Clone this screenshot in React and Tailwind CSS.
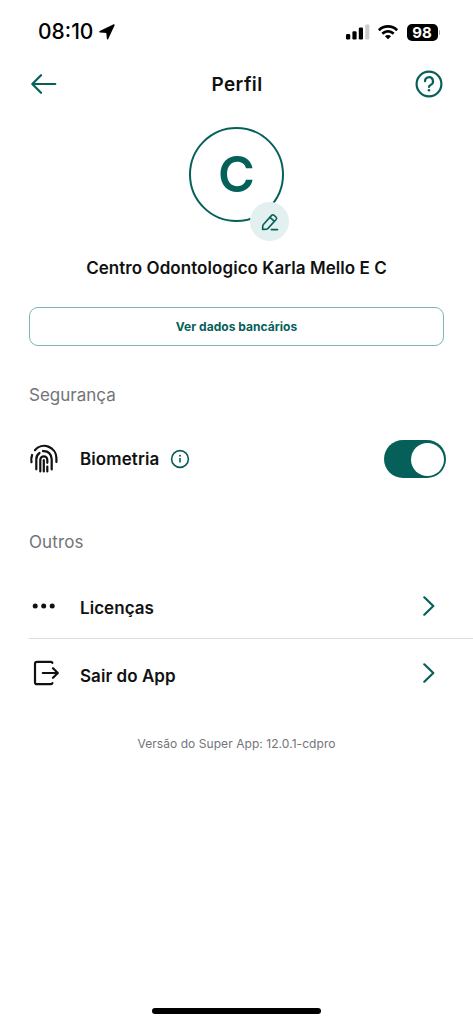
import React from "react";

function StatusBar() {
  return (
    <div className="flex h-16 items-center justify-between pl-[38px] pr-[33px]">
      <div className="flex items-center gap-[6px]">
        <span className="text-[21px] font-medium leading-6 text-black">08:10</span>
        <svg
          width="16"
          height="16"
          viewBox="0 0 16 16"
          fill="#000"
          stroke="#000"
          strokeWidth="1.4"
          strokeLinejoin="round"
        >
          <path d="M15 1L8.600 14.800 7.900 8.200 1 7.700z" />
        </svg>
      </div>
      <div className="flex items-center">
        <svg width="24" height="16" viewBox="0 0 24 16">
          <rect x="0" y="10" width="4.2" height="5.5" rx="1.2" fill="#000" />
          <rect x="6.4" y="7.3" width="4.2" height="8.2" rx="1.2" fill="#000" />
          <rect x="12.8" y="3.6" width="4.2" height="11.9" rx="1.2" fill="#000" />
          <rect x="19.2" y="0.5" width="4.2" height="15" rx="1.2" fill="#ccc" />
        </svg>
        <svg width="20" height="15" viewBox="0 0 20 15" fill="#000" className="ml-[8px]">
          <path d="M10 0C6.2 0 2.7 1.5.2 4c-.2.2-.2.4 0 .6l1.300 1.300c.2.2.4.2.6 0C4.200 3.900 7 2.800 10 2.800s5.800 1.100 7.900 3.100c.2.2.4.2.6 0l1.300-1.300c.2-.2.2-.4 0-.6C17.300 1.500 13.800 0 10 0z" />
          <path d="M10 5C7.600 5 5.400 5.900 3.700 7.400c-.2.2-.2.5 0 .7L5 9.400c.2.2.4.2.6 0C6.800 8.400 8.300 7.800 10 7.800s3.200.6 4.400 1.600c.2.2.4.2.6 0l1.300-1.300c.2-.2.2-.5 0-.7C14.600 5.900 12.400 5 10 5z" />
          <path d="M10 10c-1.100 0-2 .4-2.800 1-.2.2-.2.4 0 .6l2.500 2.500c.2.2.4.2.6 0l2.500-2.500c.2-.2.2-.4 0-.6-.8-.6-1.700-1-2.800-1z" />
        </svg>
        <div className="ml-[9px] flex h-[17px] w-[31px] items-center justify-center rounded-[5px] bg-black text-[15px] font-bold leading-none text-white">
          98
        </div>
        <div className="ml-px h-[5px] w-[1.5px] rounded-r bg-[#aaa]" />
      </div>
    </div>
  );
}

function FingerprintIcon() {
  return (
    <svg
      width="30"
      height="30"
      viewBox="0 0 30 30"
      fill="none"
      stroke="#111"
      strokeWidth="2.2"
      strokeLinecap="round"
    >
      <path d="M5.900 6.200A12.200 12.200 0 0 1 27.400 14v4" />
      <path d="M3.100 11c-.9 2.300-1.100 4.700-.6 7.200" />
      <path d="M7.300 25.300V15.300a7.500 7.500 0 0 1 3.200-6.300M14 7.200c5-.5 8.700 2.800 8.700 8v10.300" />
      <path d="M11.300 27.500V15.800a3.500 3.500 0 0 1 7 0v3M18.300 22.500v5" />
      <path d="M14.800 16.200v11.300" />
    </svg>
  );
}

function ExitIcon() {
  return (
    <svg
      width="30"
      height="28"
      viewBox="0 0 30 28"
      fill="none"
      stroke="#111"
      strokeWidth="2.2"
      strokeLinecap="round"
      strokeLinejoin="round"
    >
      <path d="M23.400 3.900A1.600 1.600 0 0 0 22 2.800H8A2 2 0 0 0 6 4.800v18.400a2 2 0 0 0 2 2h14a1.600 1.600 0 0 0 1.400-1.100" />
      <path d="M13.800 14h14.800M24 9.200l4.800 4.800-4.800 4.800" />
    </svg>
  );
}

function DotsIcon() {
  return (
    <svg width="28" height="6" viewBox="0 0 28 6" fill="#111">
      <circle cx="6.2" cy="3" r="2.5" />
      <circle cx="14.7" cy="3" r="2.5" />
      <circle cx="23.2" cy="3" r="2.5" />
    </svg>
  );
}

function MenuRow({ icon, label }) {
  return (
    <button type="button" className="flex h-[67px] w-full items-center pr-[38px] text-left">
      <span className="flex h-[30px] w-[51px] items-center pt-px">{icon}</span>
      <span className="flex-1 pt-[6px] text-[17px] font-semibold leading-6 tracking-[0.05px]">
        {label}
      </span>
      <svg
        width="12"
        height="20"
        viewBox="0 0 12 20"
        fill="none"
        stroke="#06605a"
        strokeWidth="2.2"
        strokeLinecap="round"
        strokeLinejoin="round"
        className="mt-px"
      >
        <path d="M1.300 1.300L10.300 10l-9 8.700" />
      </svg>
    </button>
  );
}

export default function App() {
  return (
    <div className="flex h-[1024px] w-[473px] flex-col overflow-hidden bg-white font-['Inter',sans-serif] text-[#111]">
      <StatusBar />

      <header className="flex h-10 items-center justify-between pl-[31px] pr-[30px]">
        <svg
          width="28"
          height="20"
          viewBox="0 0 28 20"
          fill="none"
          stroke="#06605a"
          strokeWidth="2.2"
          strokeLinecap="round"
          strokeLinejoin="round"
        >
          <path d="M24.300 10H1.300M10 1.200L1.300 10l8.700 8.800" />
        </svg>
        <h1 className="pt-px text-[19px] font-semibold leading-6 tracking-[0.4px]">Perfil</h1>
        <svg
          width="28"
          height="28"
          viewBox="0 0 28 28"
          fill="none"
          stroke="#06605a"
          strokeWidth="2.2"
          strokeLinecap="round"
          strokeLinejoin="round"
        >
          <circle cx="14" cy="14" r="12.4" />
          <path d="M10 11.200a4 4 0 1 1 5.600 3.700c-1 .4-1.600 1-1.600 2.100" />
          <circle cx="14" cy="20.3" r="1.3" fill="#06605a" stroke="none" />
        </svg>
      </header>

      {/* Avatar */}
      <div className="relative mx-auto mt-[23px] flex size-[95px] shrink-0 items-center justify-center rounded-full border-[2.5px] border-[#06605a]">
        <span className="pb-px text-[50px] font-semibold leading-none text-[#06605a]">C</span>
        <button
          type="button"
          className="absolute -right-[7px] -bottom-[21px] flex size-[39px] items-center justify-center rounded-full bg-[#e3f0f0]"
        >
          <svg
            width="18"
            height="18"
            viewBox="0 0 18 18"
            fill="none"
            stroke="#06605a"
            strokeWidth="1.6"
            strokeLinecap="round"
            strokeLinejoin="round"
          >
            <path d="M1.600 16.400l.2-3.700a1.500 1.500 0 0 1 .4-.9L10.600 2.400a1.800 1.800 0 0 1 2.500-.1l1.900 1.700a1.800 1.800 0 0 1 .1 2.500L6.800 15.600a1.500 1.500 0 0 1-.9.500z" />
            <path d="M9 4.300l4.400 4M10.300 16.600h6.200" />
          </svg>
        </button>
      </div>

      <h2 className="mt-[34px] text-center text-[17px] font-semibold leading-6 tracking-[0.06px]">
        Centro Odontologico Karla Mello E C
      </h2>

      <button
        type="button"
        className="mx-[29px] mt-[27px] h-[39px] shrink-0 rounded-[9px] border border-[#7fb5b3] text-[12px] font-bold tracking-[0.04px] text-[#06605a]"
      >
        Ver dados bancários
      </button>

      <section className="mt-[37px] pl-[29px]">
        <h3 className="text-[17px] leading-6 text-[#727479]">Segurança</h3>
        <div className="mt-8 flex h-10 items-center pr-[27px]">
          <span className="w-[51px]">
            <FingerprintIcon />
          </span>
          <span className="text-[17px] font-semibold leading-6 tracking-[0.1px]">Biometria</span>
          <svg
            width="20"
            height="20"
            viewBox="0 0 20 20"
            fill="none"
            stroke="#06605a"
            strokeWidth="1.6"
            className="ml-[11px]"
          >
            <circle cx="10" cy="10" r="8.4" />
            <path d="M10 9v4.500" />
            <circle cx="10" cy="6.8" r="1" fill="#06605a" stroke="none" />
          </svg>
          <button
            type="button"
            role="switch"
            aria-checked="true"
            className="ml-auto flex h-[38px] w-[62px] items-center justify-end rounded-full bg-[#06605a] pr-[2px]"
          >
            <span className="size-[33px] rounded-full bg-white" />
          </button>
        </div>
      </section>

      <section className="mt-[51px] pl-[29px]">
        <h3 className="text-[17px] leading-6 tracking-[0.1px] text-[#727479]">Outros</h3>
        <div className="mt-[18px] divide-y divide-[#dcdcdc]">
          <MenuRow icon={<DotsIcon />} label="Licenças" />
          <MenuRow icon={<ExitIcon />} label="Sair do App" />
        </div>
      </section>

      <p className="mt-[30px] text-center text-[12px] leading-4 tracking-[0.06px] text-[#727479]">
        Versão do Super App: 12.0.1-cdpro
      </p>

      <div className="mx-auto mt-auto mb-[10px] h-[6px] w-[169px] rounded-full bg-black" />
    </div>
  );
}
